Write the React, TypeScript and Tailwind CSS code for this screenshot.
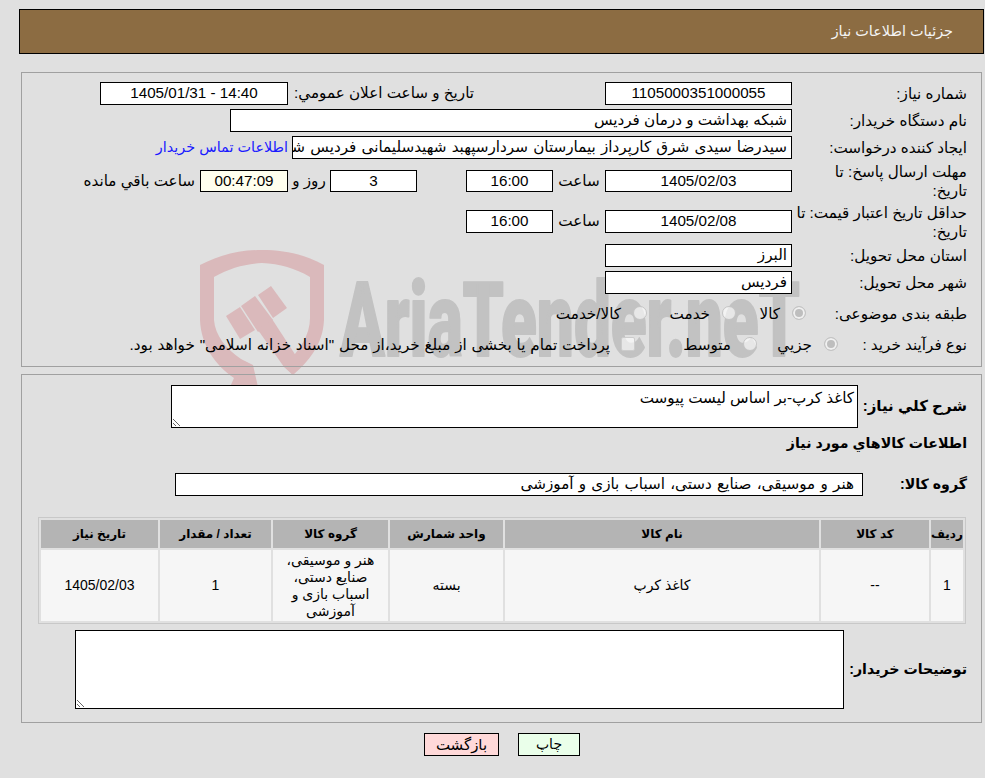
const wm = "#c2c2c2";
const red = "#dab9bb";

function Watermark() {
  return (
    <svg className="absolute left-0 top-0 z-0" width="985" height="778" viewBox="0 0 985 778">
      <path
        fill={red}
        fillRule="evenodd"
        d="M200 265 C222 254 240 250 262 250 C284 250 304 254 324 265 L324 320 C323 345 308 362 293 375 L284 366 C300 350 310 335 310 318 L310 277 C295 268 280 264 262 263 C245 264 230 268 214 277 L214 320 C215 335 226 349 241 359 L253 365 L258 387 L230 387 L234 378 C215 365 201 345 200 320 Z"
      />
      <polygon fill={red} points="226,316 240,307 255,330 240,339" />
      <polygon fill={red} points="241,306 255,296 273,320 258,332" />
      <polygon fill={red} points="258,295 271,286 287,308 273,318" />
      <polygon fill={red} points="258,330 272,319 300,362 293,375 284,367" />
      <text
        x="340"
        y="356"
        fill={wm}
        stroke={wm}
        strokeWidth="2"
        strokeLinejoin="round"
        direction="ltr"
        fontFamily="Roboto, sans-serif"
        fontWeight="900"
        fontSize="103"
        textLength="460"
        lengthAdjust="spacingAndGlyphs"
      >
        AriaTender.neT
      </text>
    </svg>
  );
}

function Box({ w, children, bg = "bg-white", center = true, h = "h-[23px]", className = "" }: any) {
  return (
    <div
      className={`shrink-0 border border-black ${h} ${bg} flex items-center overflow-hidden whitespace-nowrap ${
        center ? "justify-center" : "justify-start pr-[4px]"
      } ${w} ${className}`}
    >
      {children}
    </div>
  );
}

function Label({ w = "w-[175px]", children }: any) {
  return <div className={`shrink-0 leading-[19px] ${w}`}>{children}</div>;
}

function Row({ h, children }: any) {
  return <div className={`flex items-center ${h}`}>{children}</div>;
}

function Option({ w, checked = false, name, children }: any) {
  return (
    <label className={`flex shrink-0 items-center gap-[12px] whitespace-nowrap ${w}`}>
      <input
        type="radio"
        name={name}
        disabled
        defaultChecked={checked}
        className="m-0 h-[14px] w-[14px] shrink-0 appearance-none rounded-full border border-[#c4c4c4] bg-white/60 checked:bg-[#bebebe] checked:shadow-[inset_0_0_0_2px_#f0f0f0]"
      />
      <span className="pt-[2px]">{children}</span>
    </label>
  );
}

export default function App() {
  return (
    <div
      dir="rtl"
      className="relative w-[985px] h-[778px] overflow-hidden bg-[#e0e0e0] text-black text-[15.2px] font-['Liberation_Sans','DejaVu_Sans',sans-serif]"
    >
      <Watermark />
      <div className="relative z-10 pt-[9px] pr-px pl-[19px]">
        {/* HEADER */}
        <div className="h-[45px] border border-black bg-[#8c6c42] text-[#f4f4f4] text-[14.4px] flex items-center pr-[30px]">
          جزئیات اطلاعات نیاز
        </div>
      </div>

      <div className="relative z-10 mt-[18px] mr-[3px] ml-[21px]">
        {/* DETAILS */}
        <div className="h-[295px] border border-[#a0a0a0] pt-[7px] pr-[14px]">
          <Row h="h-[27px]">
            <Label>شماره نیاز:</Label>
            <Box w="w-[187px]">
              <span dir="ltr">1105000351000055</span>
            </Box>
            <div className="w-[312px] shrink-0 pr-[131px] whitespace-nowrap">تاریخ و ساعت اعلان عمومي:</div>
            <Box w="w-[188px]" className="mr-[5px]">
              <span dir="ltr">1405/01/31 - 14:40</span>
            </Box>
          </Row>
          <Row h="h-[27px]">
            <Label>نام دستگاه خریدار:</Label>
            <Box w="w-[562px]" center={false}>
              شبکه بهداشت و درمان فردیس
            </Box>
          </Row>
          <Row h="h-[27px]">
            <Label>ایجاد کننده درخواست:</Label>
            <Box w="w-[500px]" center={false} className="[word-spacing:1px]">
              سیدرضا سیدی شرق کارپرداز بیمارستان سردارسپهبد شهیدسلیمانی فردیس شهر
            </Box>
            <a className="mr-[4px] text-[#1a1aff] text-[14.4px] whitespace-nowrap">اطلاعات تماس خریدار</a>
          </Row>
          <Row h="h-[40px]">
            <Label>
              مهلت ارسال پاسخ: تا
              <br />
              تاریخ:
            </Label>
            <Box w="w-[187px]" h="h-[22px]">
              <span dir="ltr">1405/02/03</span>
            </Box>
            <div className="w-[52px] shrink-0 text-center">ساعت</div>
            <Box w="w-[87px]" h="h-[22px]">16:00</Box>
            <div className="w-[49px] shrink-0" />
            <Box w="w-[87px]" h="h-[22px]">3</Box>
            <div className="w-[42px] shrink-0 text-center">روز و</div>
            <Box w="w-[88px]" h="h-[22px]" bg="bg-[#ffffee]">
              00:47:09
            </Box>
            <div className="mr-[5px] whitespace-nowrap">ساعت باقي مانده</div>
          </Row>
          <Row h="h-[41px]">
            <Label>
              حداقل تاریخ اعتبار قیمت: تا
              <br />
              تاریخ:
            </Label>
            <Box w="w-[187px]">
              <span dir="ltr">1405/02/08</span>
            </Box>
            <div className="w-[52px] shrink-0 text-center">ساعت</div>
            <Box w="w-[87px]">16:00</Box>
          </Row>
          <Row h="h-[27px]">
            <Label>استان محل تحویل:</Label>
            <Box w="w-[187px]" center={false}>
              البرز
            </Box>
          </Row>
          <Row h="h-[27px]">
            <Label>شهر محل تحویل:</Label>
            <Box w="w-[187px]" center={false}>
              فردیس
            </Box>
          </Row>
          <Row h="h-[35px]">
            <Label w="w-[161px]">طبقه بندی موضوعی:</Label>
            <Option w="w-[70px]" checked name="kind">
              کالا
            </Option>
            <Option w="w-[89px]" name="kind">
              خدمت
            </Option>
            <Option w="w-[90px]" name="kind">
              کالا/خدمت
            </Option>
          </Row>
          <Row h="h-[26px]">
            <Label w="w-[129px]">نوع فرآیند خرید :</Label>
            <Option w="w-[81px]" checked name="proc">
              جزيي
            </Option>
            <Option w="w-[122px]" name="proc">
              متوسط
            </Option>
            <div className="flex items-center gap-[11px] whitespace-nowrap">
              <input
                type="checkbox"
                disabled
                className="m-0 h-[14px] w-[14px] shrink-0 appearance-none rounded-[2px] border border-[#cccccc] bg-white/60"
              />
              <span className="pt-[2px] [word-spacing:0.6px]">پرداخت تمام یا بخشی از مبلغ خرید،از محل "اسناد خزانه اسلامی" خواهد بود.</span>
            </div>
          </Row>
        </div>

        {/* GOODS */}
        <div className="mt-[7px] h-[349px] border border-[#a0a0a0] pt-[10px] pr-[14px]">
          <div className="flex items-center h-[43px]">
            <div className="w-[109px] shrink-0 text-[15px] font-bold whitespace-nowrap">شرح کلي نیاز:</div>
            <textarea
              readOnly
              value="کاغذ کرپ-بر اساس لیست پیوست"
              className="block h-[43px] w-[687px] border border-black bg-white px-[3px] py-[1px] leading-[22px] outline-none"
            />
          </div>
          <div className="mt-[1px] h-[30px] flex items-center text-[14.2px] font-bold">اطلاعات کالاهاي مورد نیاز</div>
          <div className="mt-[14px] flex items-center h-[23px]">
            <div className="w-[104px] shrink-0 text-[14.2px] font-bold">گروه کالا:</div>
            <Box w="w-[688px]" center={false} className="pr-[8px] [word-spacing:1px]">
              هنر و موسیقی، صنایع دستی، اسباب بازی و آموزشی
            </Box>
          </div>
          <table className="mt-[21px] mr-px w-[928px] table-fixed border-separate border-spacing-[2px] border border-[#c8c8c8] text-center">
            <colgroup>
              <col className="w-[32px]" />
              <col className="w-[108px]" />
              <col className="w-[314px]" />
              <col className="w-[113px]" />
              <col className="w-[115px]" />
              <col className="w-[111px]" />
              <col className="w-[117px]" />
            </colgroup>
            <thead>
              <tr className="h-[28px] bg-[#b4b4b4] text-[12px]">
                <th>ردیف</th>
                <th>کد کالا</th>
                <th>نام کالا</th>
                <th>واحد شمارش</th>
                <th>گروه کالا</th>
                <th>تعداد / مقدار</th>
                <th>تاریخ نیاز</th>
              </tr>
            </thead>
            <tbody>
              <tr className="h-[71px] bg-[#f6f6f6] text-[14px]">
                <td>1</td>
                <td>--</td>
                <td>کاغذ کرپ</td>
                <td>بسته</td>
                <td className="leading-[17px] px-[6px]">هنر و موسیقی، صنایع دستی، اسباب بازی و آموزشی</td>
                <td>1</td>
                <td>
                  <span dir="ltr">1405/02/03</span>
                </td>
              </tr>
            </tbody>
          </table>
          <div className="mt-[6px] flex items-center">
            <div className="w-[123px] shrink-0 text-[14.2px] font-bold whitespace-nowrap">توضیحات خریدار:</div>
            <textarea readOnly className="block h-[79px] w-[769px] border border-black bg-white outline-none" />
          </div>
        </div>
      </div>

      {/* BUTTONS */}
      <div className="relative z-10 mt-[10px] flex justify-center gap-[19px] pl-[19px]">
        <button className="h-[23px] w-[62px] border border-black bg-[#eaffea] text-[14px]">چاپ</button>
        <button className="h-[23px] w-[75px] border border-black bg-[#ffd9d9] text-[15px]">بازگشت</button>
      </div>
    </div>
  );
}
